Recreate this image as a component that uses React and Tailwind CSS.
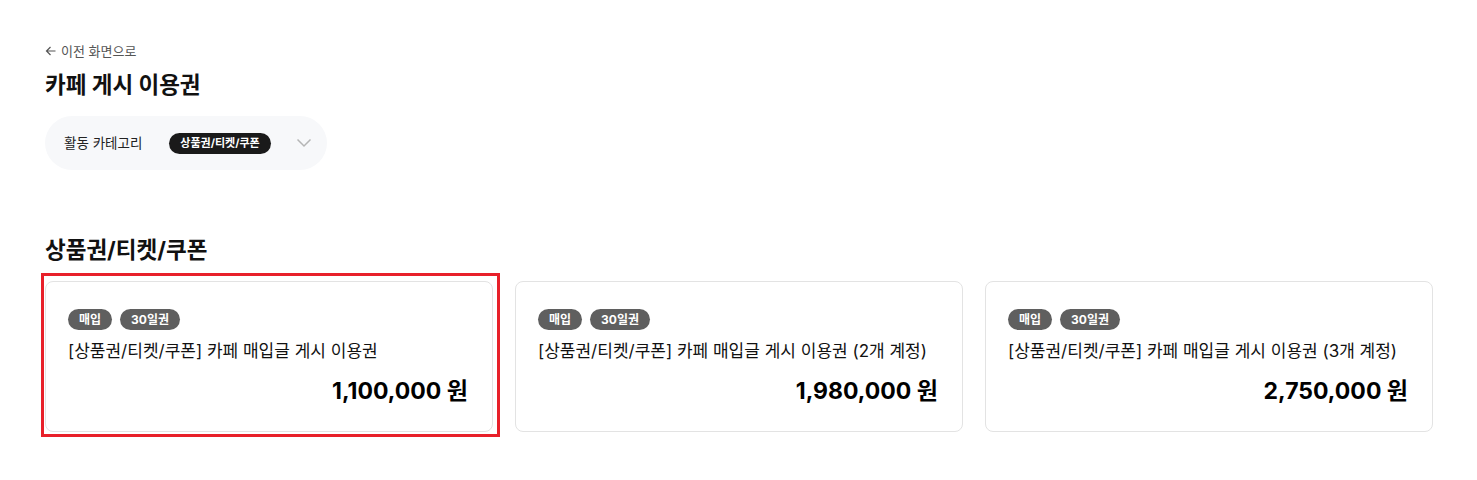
import React from 'react'

const font = { fontFamily: 'Inter, "Noto Sans CJK KR", sans-serif' }

const tickets = [
  { title: '[상품권/티켓/쿠폰] 카페 매입글 게시 이용권', price: '1,100,000' },
  { title: '[상품권/티켓/쿠폰] 카페 매입글 게시 이용권 (2개 계정)', price: '1,980,000' },
  { title: '[상품권/티켓/쿠폰] 카페 매입글 게시 이용권 (3개 계정)', price: '2,750,000' },
]

const Badge = ({ children }) => (
  <span className='inline-flex h-[21px] items-center rounded-full bg-[#5f5f5f] px-[11px] text-[12px] font-bold text-white'>
    {children}
  </span>
)

const TicketCard = ({ title, price, selected }) => (
  <div className='relative'>
    {selected && (
      <div className='pointer-events-none absolute -left-[4px] -top-[8px] h-[164px] w-[459px] border-[3px] border-[#e8202a]' />
    )}
    <div className='flex h-[151px] flex-col rounded-[8px] border border-[#e3e3e3] bg-white pl-[22px] pr-[24px] pt-[27px]'>
      <div className='flex gap-2'>
        <Badge>매입</Badge>
        <Badge>30일권</Badge>
      </div>
      <p className='mt-[9px] text-[17px] leading-[25px] text-[#111]'>{title}</p>
      <p className='mt-[12px] self-end text-[23px] font-bold leading-[31px] text-black'>{price} 원</p>
    </div>
  </div>
)

const App = () => {
  return (
    <div className='min-h-[480px] bg-white pl-[45px] pr-[44px] pt-[43px]' style={font}>
      <a href='#' className='flex items-center gap-1 text-[13px] leading-4 text-[#555]'>
        <svg width='12' height='12' viewBox='0 0 12 12' fill='none' stroke='#555' strokeWidth='1.2'>
          <path d='M10.5 6H1.5M5.5 2L1.5 6L5.5 10' />
        </svg>
        이전 화면으로
      </a>
      <h1 className='mt-[11px] text-[22.5px] font-bold leading-[30px] text-[#111]'>카페 게시 이용권</h1>

      <div className='mt-[16px] flex h-[54px] w-[282px] items-center rounded-full bg-[#f7f8fa] pl-[19px]'>
        <span className='text-[13.5px] text-[#222]'>활동 카테고리</span>
        <span className='ml-[27px] inline-flex h-[21px] items-center rounded-full bg-[#1a1a1a] px-[11px] text-[11px] font-bold text-white'>
          상품권/티켓/쿠폰
        </span>
        <svg className='ml-[25px]' width='16' height='10' viewBox='0 0 16 10' fill='none' stroke='#b5b5b5' strokeWidth='1.5'>
          <path d='M1.5 1.5L8 8L14.5 1.5' />
        </svg>
      </div>

      <h2 className='mt-[65px] text-[22.5px] font-bold leading-[30px] text-[#111]'>상품권/티켓/쿠폰</h2>

      <div className='mt-[16px] grid grid-cols-3 gap-[22px]'>
        {tickets.map((t, i) => (
          <TicketCard key={i} title={t.title} price={t.price} selected={i === 0} />
        ))}
      </div>
    </div>
  )
}

export default App
